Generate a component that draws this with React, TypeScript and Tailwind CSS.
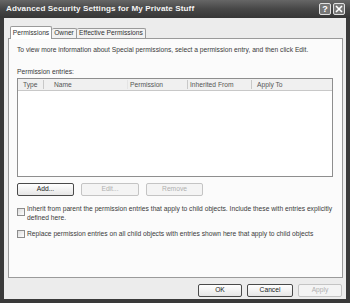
import React from 'react'

const font = { fontFamily: '"Liberation Sans", Arial, sans-serif' }

function Btn({ label, disabled, w }: { label: string; disabled?: boolean; w: string }) {
    return (
        <div
            className={`${w} h-[13px] flex items-center justify-center rounded-[2px] border text-[6.7px] ${disabled ? 'border-[#c4c4c4] text-[#b0b0b0] bg-[#f4f4f4]' : 'border-[#4a4a4a] text-[#222] bg-gradient-to-b from-white to-[#e6e6e6]'}`}
        >
            {label}
        </div>
    )
}

function Check() {
    return <div className="w-[8px] h-[8px] shrink-0 border border-[#8c8c8c] bg-gradient-to-br from-[#dcdcdc] to-white" />
}

export default function App() {
    return (
        <div className="w-[350px] h-[303px] flex flex-col bg-[#3a3a3a]" style={font}>
            {/* title bar */}
            <div className="h-[18px] flex items-center pl-[6px] pr-[5px] bg-gradient-to-b from-[#666] via-[#474747] to-[#363636]">
                <span className="text-[8.1px] font-bold text-[#f4f4f4] tracking-[0.1px]">Advanced Security Settings for My Private Stuff</span>
                <div className="ml-auto flex gap-[2px]">
                    <div className="w-[12px] h-[12px] rounded-[2px] border border-[#e0e0e0] bg-[#777] flex items-center justify-center text-[9px] font-bold text-white leading-none">?</div>
                    <div className="w-[12px] h-[12px] rounded-[2px] border border-[#e0e0e0] bg-[#777] flex items-center justify-center">
                        <svg width="8" height="8" viewBox="0 0 8 8"><path d="M1 1L7 7M7 1L1 7" stroke="#fff" strokeWidth="1.6" /></svg>
                    </div>
                </div>
            </div>
            {/* body */}
            <div className="flex-1 mx-[4px] mb-[4px] bg-[#ececec] flex flex-col pl-[4px] pr-[3px] pt-[7px]">
                {/* tabs */}
                <div className="flex items-end h-[13px] pl-[2px] text-[6.7px] text-[#333]">
                    <div className="w-[42px] h-[13px] flex items-center justify-center bg-white border border-b-0 border-[#9a9a9a] rounded-t-[2px] relative top-[1px]">Permissions</div>
                    <div className="w-[25px] h-[10px] flex items-center justify-center bg-[#f2f2f2] border border-b-0 border-l-0 border-[#9a9a9a] rounded-t-[2px]">Owner</div>
                    <div className="w-[69px] h-[10px] flex items-center justify-center bg-[#f2f2f2] border border-b-0 border-l-0 border-[#9a9a9a] rounded-t-[2px]">Effective Permissions</div>
                </div>
                {/* panel */}
                <div className="h-[240px] bg-[#fbfbfb] border border-[#9a9a9a] flex flex-col pl-[8px] pr-[9px] text-[6.7px] text-[#3a3a3a]">
                    <div className="mt-[7px] h-[8px] leading-[8px]">To view more information about Special permissions, select a permission entry, and then click Edit.</div>
                    <div className="mt-[14px] h-[8px] leading-[8px]">Permission entries:</div>
                    <div className="mt-[2px] h-[99px] border border-[#8e8e8e] bg-white flex flex-col">
                        <div className="h-[12px] flex items-center bg-[#f0f0f0] border-b border-[#c8c8c8] text-[#555]">
                            <div className="w-[26px] pl-[5px] border-r border-[#c8c8c8] h-[9px] leading-[9px]">Type</div>
                            <div className="w-[84px] pl-[10px] border-r border-[#e4e4e4] h-[9px] leading-[9px]">Name</div>
                            <div className="w-[60px] pl-[2px] border-r border-[#c8c8c8] h-[9px] leading-[9px]">Permission</div>
                            <div className="w-[64px] pl-[2px] border-r border-[#c8c8c8] h-[9px] leading-[9px]">Inherited From</div>
                            <div className="pl-[5px] h-[9px] leading-[9px]">Apply To</div>
                        </div>
                    </div>
                    <div className="mt-[6px] flex gap-[7px]">
                        <Btn label="Add..." w="w-[57px]" />
                        <Btn label="Edit..." w="w-[58px]" disabled />
                        <Btn label="Remove" w="w-[57px]" disabled />
                    </div>
                    <div className="mt-[8px] flex gap-[2px] items-start">
                        <div className="mt-[4px]"><Check /></div>
                        <div className="leading-[9px]">Inherit from parent the permission entries that apply to child objects. Include these with entries explicitly<br />defined here.</div>
                    </div>
                    <div className="mt-[7px] flex gap-[2px] items-center">
                        <Check />
                        <div className="leading-[9px]">Replace permission entries on all child objects with entries shown here that apply to child objects</div>
                    </div>
                </div>
                {/* bottom buttons */}
                <div className="mt-[6px] flex justify-end gap-[5px] pr-[1px]">
                    <Btn label="OK" w="w-[44px]" />
                    <Btn label="Cancel" w="w-[46px]" />
                    <Btn label="Apply" w="w-[44px]" disabled />
                </div>
            </div>
        </div>
    )
}
